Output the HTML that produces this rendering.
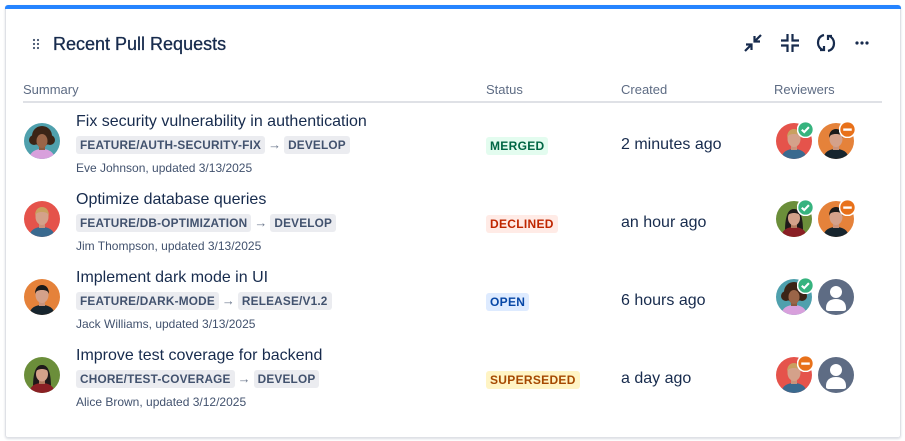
<!DOCTYPE html>
<html><head><meta charset="utf-8"><style>
*{box-sizing:border-box;margin:0;padding:0}
body{width:905px;height:441px;background:#fff;font-family:"Liberation Sans",sans-serif;color:#172b4d;position:relative;overflow:hidden}
.card{position:absolute;left:5px;top:5px;width:896px;height:433px;border:1px solid #dfe1e6;border-top:none;border-radius:3px;box-shadow:0 1px 2px rgba(9,30,66,.15)}
.bar{position:absolute;left:5px;top:5px;width:896px;height:4px;background:#2684ff;border-radius:3px 3px 0 0}
.a{position:absolute}
.h{font-size:18px;color:#172b4d;left:53px;top:34px;-webkit-text-stroke:.3px #172b4d}
.th{font-size:13px;color:#5e6c84;top:82px}
.line{left:23px;top:101px;width:859px;height:2px;background:#dfe1e6}
.t{font-size:16px;left:76px;color:#172b4d}
.br{font-size:11.8px;font-weight:bold;color:#42526e;background:#ebecf0;border-radius:3px;padding:2px 4px;letter-spacing:.2px}
.m{font-size:12px;color:#42526e;left:76px}
.st{font-size:12px;font-weight:bold;border-radius:3px;padding:2px 4px;left:486px;letter-spacing:.3px}
.c{font-size:16px;left:621px}
.arr{color:#6b778c;font-size:13px;margin:0 3px}
</style></head><body>
<svg width="0" height="0" style="position:absolute">
<defs>
<clipPath id="cp"><circle cx="18" cy="18" r="18"/></clipPath>
<symbol id="man" viewBox="0 0 36 36"><circle cx="18" cy="18" r="18" fill="var(--bg)"/><g clip-path="url(#cp)"><path d="M5 36c1-7 6-10 13-10s12 3 13 10z" fill="var(--sh)"/><rect x="15" y="21" width="6" height="6" fill="#c8937c"/><ellipse cx="18" cy="16" rx="6.5" ry="8" fill="#d4a18a"/><path d="M11 15c0-6 3-9 7-9s7 3 7 9c-1-3-3-4-7-4s-6 1-7 4z" fill="var(--hr)"/></g></symbol>
<symbol id="wom" viewBox="0 0 36 36"><circle cx="18" cy="18" r="18" fill="var(--bg)"/><g clip-path="url(#cp)"><path d="M9 30c0-12 2-22 9-22s9 10 9 22z" fill="var(--hr)"/><path d="M5 36c1-7 6-10 13-10s12 3 13 10z" fill="var(--sh)"/><rect x="15" y="21" width="6" height="6" fill="#b07a5e"/><ellipse cx="18" cy="17" rx="6" ry="7.5" fill="var(--sk)"/><path d="M11 15c1-5 4-7 7-7s6 2 7 7c-2-2-4-3-7-3s-5 1-7 3z" fill="var(--hr)"/></g></symbol>
<symbol id="curly" viewBox="0 0 36 36"><circle cx="18" cy="18" r="18" fill="#4fa0ad"/><g clip-path="url(#cp)"><circle cx="18" cy="13" r="10" fill="#3b2416"/><circle cx="10" cy="17" r="5" fill="#3b2416"/><circle cx="26" cy="17" r="5" fill="#3b2416"/><path d="M5 36c1-7 6-10 13-10s12 3 13 10z" fill="#d8a0dc"/><rect x="15" y="21" width="6" height="6" fill="#8a5a40"/><ellipse cx="18" cy="18" rx="5.5" ry="7" fill="#9a6548"/></g></symbol>
<symbol id="gray" viewBox="0 0 36 36"><circle cx="18" cy="18" r="18" fill="#5e6c84"/><circle cx="18" cy="13" r="6" fill="#fff"/><path d="M8 29c0-6 4-9 10-9s10 3 10 9v1c0 2-2 2-4 2H12c-2 0-4 0-4-2z" fill="#fff"/></symbol>
<symbol id="ok" viewBox="0 0 16 16"><circle cx="8" cy="8" r="7.5" fill="#36b37e" stroke="#fff" stroke-width="1.5"/><path d="M4.5 8.2l2.3 2.2 4.4-4.6" stroke="#fff" stroke-width="2" fill="none"/></symbol>
<symbol id="no" viewBox="0 0 16 16"><circle cx="8" cy="8" r="7.5" fill="#e8711a" stroke="#fff" stroke-width="1.5"/><rect x="4" y="7" width="8" height="2.2" fill="#fff"/></symbol>
</defs></svg>
<div class="card"></div><div class="bar"></div>
<svg class="a" style="left:32px;top:38px" width="8" height="12" viewBox="0 0 8 12" fill="#42526e"><circle cx="2" cy="2" r="1.1"/><circle cx="6" cy="2" r="1.1"/><circle cx="2" cy="6" r="1.1"/><circle cx="6" cy="6" r="1.1"/><circle cx="2" cy="10" r="1.1"/><circle cx="6" cy="10" r="1.1"/></svg>
<div class="a h">Recent Pull Requests</div>
<svg class="a" style="left:743px;top:33px" width="20" height="20" viewBox="0 0 20 20" stroke="#172b4d" stroke-width="2.2" fill="none"><path d="M2 18l6-6M3 11.5h5.5V17M18 2l-6 6M17 8.5h-5.5V3"/></svg>
<svg class="a" style="left:780px;top:33px" width="20" height="20" viewBox="0 0 20 20" stroke="#172b4d" stroke-width="2.2" fill="none"><path d="M7.5 1v6.5H1M12.5 1v6.5H19M7.5 19v-6.5H1M12.5 19v-6.5H19"/></svg>
<svg class="a" style="left:816px;top:32px" width="20" height="22" viewBox="0 0 20 22" stroke="#172b4d" stroke-width="2.2" fill="none"><path d="M8 3C4 4 2 7 2 11c0 3 2 6 5 7M4 18h4v-4M12 19c4-1 6-4 6-8 0-3-2-6-5-7M16 4h-4v4"/></svg>
<svg class="a" style="left:855px;top:41px" width="14" height="4" viewBox="0 0 14 4" fill="#172b4d"><circle cx="2" cy="2" r="1.6"/><circle cx="7" cy="2" r="1.6"/><circle cx="12" cy="2" r="1.6"/></svg>
<div class="a th" style="left:23px">Summary</div>
<div class="a th" style="left:486px">Status</div>
<div class="a th" style="left:621px">Created</div>
<div class="a th" style="left:774px">Reviewers</div>
<div class="a line"></div>

<!-- row1 -->
<svg class="a" style="left:24px;top:123px" width="36" height="36"><use href="#curly"/></svg>
<div class="a t" style="top:113px">Fix security vulnerability in authentication</div>
<div class="a" style="left:76px;top:136px"><span class="br">FEATURE/AUTH-SECURITY-FIX</span><span class="arr">→</span><span class="br">DEVELOP</span></div>
<div class="a m" style="top:161px">Eve Johnson, updated 3/13/2025</div>
<div class="a st" style="top:137px;background:#e3fcef;color:#006644">MERGED</div>
<div class="a c" style="top:136px">2 minutes ago</div>
<svg class="a" style="left:776px;top:123px;--bg:#e5534b;--hr:#c9a060;--sh:#3a6a8f" width="36" height="36"><use href="#man"/></svg>
<svg class="a" style="left:797px;top:121px" width="17" height="17"><use href="#ok"/></svg>
<svg class="a" style="left:818px;top:123px;--bg:#e5823a;--hr:#1a1a1a;--sh:#17252e" width="36" height="36"><use href="#man"/></svg>
<svg class="a" style="left:839px;top:121px" width="17" height="17"><use href="#no"/></svg>

<!-- row2 -->
<svg class="a" style="left:24px;top:201px;--bg:#e5534b;--hr:#c9a060;--sh:#3a6a8f" width="36" height="36"><use href="#man"/></svg>
<div class="a t" style="top:191px">Optimize database queries</div>
<div class="a" style="left:76px;top:214px"><span class="br">FEATURE/DB-OPTIMIZATION</span><span class="arr">→</span><span class="br">DEVELOP</span></div>
<div class="a m" style="top:239px">Jim Thompson, updated 3/13/2025</div>
<div class="a st" style="top:215px;background:#ffebe6;color:#bf2600">DECLINED</div>
<div class="a c" style="top:214px">an hour ago</div>
<svg class="a" style="left:776px;top:201px;--bg:#6b8e3a;--hr:#1f1a1a;--sh:#8a1f24;--sk:#d4a18a" width="36" height="36"><use href="#wom"/></svg>
<svg class="a" style="left:797px;top:199px" width="17" height="17"><use href="#ok"/></svg>
<svg class="a" style="left:818px;top:201px;--bg:#e5823a;--hr:#1a1a1a;--sh:#17252e" width="36" height="36"><use href="#man"/></svg>
<svg class="a" style="left:839px;top:199px" width="17" height="17"><use href="#no"/></svg>

<!-- row3 -->
<svg class="a" style="left:24px;top:279px;--bg:#e5823a;--hr:#1a1a1a;--sh:#17252e" width="36" height="36"><use href="#man"/></svg>
<div class="a t" style="top:269px">Implement dark mode in UI</div>
<div class="a" style="left:76px;top:292px"><span class="br">FEATURE/DARK-MODE</span><span class="arr">→</span><span class="br">RELEASE/V1.2</span></div>
<div class="a m" style="top:317px">Jack Williams, updated 3/13/2025</div>
<div class="a st" style="top:293px;background:#deebff;color:#0747a6">OPEN</div>
<div class="a c" style="top:292px">6 hours ago</div>
<svg class="a" style="left:776px;top:279px" width="36" height="36"><use href="#curly"/></svg>
<svg class="a" style="left:797px;top:277px" width="17" height="17"><use href="#ok"/></svg>
<svg class="a" style="left:818px;top:279px" width="36" height="36"><use href="#gray"/></svg>

<!-- row4 -->
<svg class="a" style="left:24px;top:357px;--bg:#6b8e3a;--hr:#1f1a1a;--sh:#8a1f24;--sk:#d4a18a" width="36" height="36"><use href="#wom"/></svg>
<div class="a t" style="top:347px">Improve test coverage for backend</div>
<div class="a" style="left:76px;top:370px"><span class="br">CHORE/TEST-COVERAGE</span><span class="arr">→</span><span class="br">DEVELOP</span></div>
<div class="a m" style="top:395px">Alice Brown, updated 3/12/2025</div>
<div class="a st" style="top:371px;background:#fff4c4;color:#a54800">SUPERSEDED</div>
<div class="a c" style="top:370px">a day ago</div>
<svg class="a" style="left:776px;top:357px;--bg:#e5534b;--hr:#c9a060;--sh:#3a6a8f" width="36" height="36"><use href="#man"/></svg>
<svg class="a" style="left:797px;top:355px" width="17" height="17"><use href="#no"/></svg>
<svg class="a" style="left:818px;top:357px" width="36" height="36"><use href="#gray"/></svg>
</body></html>
